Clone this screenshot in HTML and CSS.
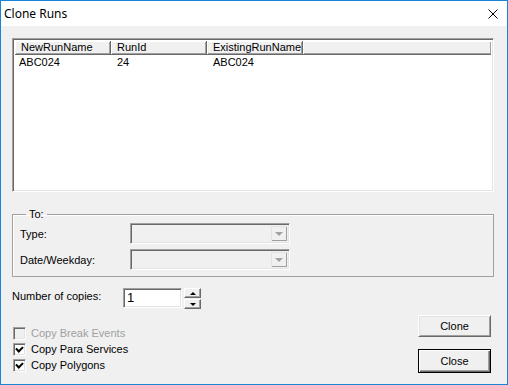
FILE: index.html
```html
<!DOCTYPE html>
<html lang="en">
<head>
    <meta charset="UTF-8">
    <title>Clone Runs</title>
    <link rel="stylesheet" href="styles.css">
</head>
<body>
    <div class="window">
        <!-- Title bar -->
        <div class="titlebar">
            <span class="title">Clone Runs</span>
            <svg class="close-x" width="10" height="10" viewBox="0 0 10 10">
                <path d="M0.5 0.5 L9.5 9.5 M9.5 0.5 L0.5 9.5" stroke="#000" stroke-width="1" fill="none"/>
            </svg>
        </div>

        <div class="content">
            <!-- Runs list -->
            <div class="listview">
                <div class="list-header">
                    <div class="hcell">NewRunName</div>
                    <div class="hcell">RunId</div>
                    <div class="hcell">ExistingRunName</div>
                    <div class="hcell filler"></div>
                </div>
                <div class="list-row">
                    <div class="cell first">ABC024</div>
                    <div class="cell">24</div>
                    <div class="cell">ABC024</div>
                </div>
            </div>

            <!-- Target group -->
            <fieldset class="group">
                <legend>To:</legend>
                <div class="field-row">
                    <label class="field-label">Type:</label>
                    <div class="combo">
                        <div class="combo-btn"><span class="arrow-down grey"></span></div>
                    </div>
                </div>
                <div class="field-row">
                    <label class="field-label">Date/Weekday:</label>
                    <div class="combo">
                        <div class="combo-btn"><span class="arrow-down grey"></span></div>
                    </div>
                </div>
            </fieldset>

            <div class="bottom">
                <div class="left-col">
                    <div class="copies-row">
                        <label class="copies-label">Number of copies:</label>
                        <div class="spin-input">1</div>
                        <div class="spin-btns">
                            <div class="spin-btn"><span class="arrow-up"></span></div>
                            <div class="spin-btn"><span class="arrow-down"></span></div>
                        </div>
                    </div>

                    <div class="checks">
                        <div class="check disabled"><span class="box"></span>Copy Break Events</div>
                        <div class="check"><span class="box checked"></span>Copy Para Services</div>
                        <div class="check"><span class="box checked"></span>Copy Polygons</div>
                    </div>
                </div>

                <div class="right-col">
                    <div class="btn">Clone</div>
                    <div class="btn default">Close</div>
                </div>
            </div>
        </div>
    </div>
</body>
</html>
```

FILE: styles.css
```css
/* Page */
body {
    margin: 0;
    font-family: "Liberation Sans", Arial, sans-serif;
    font-size: 11px;
    color: #000;
}

.window {
    width: 508px;
    height: 385px;
    box-sizing: border-box;
    border: 1px solid #1883d7;
    background: #f0f0f0;
    display: flex;
    flex-direction: column;
}

/* Title bar */
.titlebar {
    height: 25px;
    background: #fff;
    display: flex;
    align-items: center;
    justify-content: space-between;
    padding: 0 9px 0 3px;
}

.title {
    font-family: "Noto Sans", sans-serif;
    font-size: 12px;
}

.close-x {
    margin-top: 1px;
}

.content {
    padding: 12px 13px 0 11px;
}

/* Sunken 3D border used by list, inputs */
.listview,
.combo,
.spin-input {
    border-style: solid;
    border-width: 1px;
    border-color: #a0a0a0 #fff #fff #a0a0a0;
    box-shadow: inset 1px 1px 0 #696969, inset -1px -1px 0 #e3e3e3;
}

/* List view */
.listview {
    height: 154px;
    box-sizing: border-box;
    background: #fff;
    padding: 2px;
}

.list-header {
    display: flex;
    height: 14px;
}

.hcell {
    width: 96px;
    box-sizing: border-box;
    background: #f0f0f0;
    padding-left: 6px;
    line-height: 13px;
    box-shadow: inset 1px 1px 0 #fff, inset -1px -1px 0 #a0a0a0;
    border-right: 1px solid #696969;
    border-bottom: 1px solid #696969;
    height: 14px;
}

.hcell.filler {
    flex: 1;
    border-right: none;
}

.list-row {
    display: flex;
    height: 14px;
    line-height: 14px;
}

.cell {
    width: 96px;
    box-sizing: border-box;
    padding-left: 6px;
}

.cell.first {
    padding-left: 4px;
}

/* Group box */
.group {
    margin: 16px 0 0 0;
    padding: 2px 7px 6px 7px;
    border: 1px solid #a0a0a0;
    box-shadow: inset 1px 1px 0 #fff;
}

.group legend {
    margin-left: 6px;
    padding: 0 3px;
    line-height: 13px;
    font-size: 11px;
}

.field-row {
    display: flex;
    align-items: center;
    height: 21px;
}

.field-row + .field-row {
    margin-top: 5px;
}

.field-label {
    width: 110px;
}

.combo {
    width: 160px;
    height: 21px;
    box-sizing: border-box;
    background: #f0f0f0;
    display: flex;
    justify-content: flex-end;
    padding: 2px;
}

.combo-btn {
    width: 16px;
    height: 15px;
    background: #f0f0f0;
    box-shadow: inset 1px 1px 0 #e3e3e3, inset -1px -1px 0 #a0a0a0;
    display: flex;
    align-items: center;
    justify-content: center;
}

/* Small triangles */
.arrow-down,
.arrow-up {
    width: 0;
    height: 0;
    border-left: 3px solid transparent;
    border-right: 3px solid transparent;
}

.arrow-down {
    border-top: 3px solid #000;
}

.arrow-up {
    border-bottom: 3px solid #000;
}

.arrow-down.grey {
    border-left-width: 4px;
    border-right-width: 4px;
    border-top: 4px solid #a0a0a0;
}

/* Bottom section */
.bottom {
    display: flex;
    justify-content: space-between;
}

.copies-row {
    margin-top: 11px;
    display: flex;
    align-items: flex-start;
}

.copies-label {
    width: 111px;
    line-height: 16px;
    margin-top: 0;
}

.spin-input {
    width: 59px;
    height: 20px;
    box-sizing: border-box;
    background: #fff;
    font-size: 13px;
    line-height: 18px;
    padding-left: 3px;
}

.spin-btns {
    margin-left: 2px;
    display: flex;
    flex-direction: column;
    gap: 1px;
}

.spin-btn {
    width: 17px;
    height: 10px;
    box-sizing: border-box;
    background: #f0f0f0;
    border-style: solid;
    border-width: 1px;
    border-color: #fff #696969 #696969 #fff;
    box-shadow: inset -1px -1px 0 #a0a0a0;
    display: flex;
    align-items: center;
    justify-content: center;
}

.checks {
    margin-top: 16px;
}

.check {
    display: flex;
    align-items: center;
    height: 16px;
    padding-left: 1px;
}

.check.disabled {
    color: #a0a0a0;
}

.box {
    width: 13px;
    height: 13px;
    box-sizing: border-box;
    margin-right: 5px;
    background: #fff;
    border-style: solid;
    border-width: 1px;
    border-color: #a0a0a0 #fff #fff #a0a0a0;
    box-shadow: inset 1px 1px 0 #696969, inset -1px -1px 0 #e3e3e3;
    position: relative;
}

.check.disabled .box {
    background: #f0f0f0;
}

/* Check mark */
.box.checked::after {
    content: "";
    position: absolute;
    left: 2px;
    top: 1px;
    width: 5px;
    height: 3px;
    border-left: 2px solid #000;
    border-bottom: 2px solid #000;
    transform: translate(0, 1px) rotate(-45deg);
    transform-origin: center;
}

/* Buttons */
.right-col {
    margin-right: 3px;
    padding-top: 38px;
    display: flex;
    flex-direction: column;
    gap: 12px;
}

.btn {
    width: 73px;
    height: 22px;
    box-sizing: border-box;
    background: #f0f0f0;
    border-style: solid;
    border-width: 1px;
    border-color: #fff #696969 #696969 #fff;
    box-shadow: inset 1px 1px 0 #e3e3e3, inset -1px -1px 0 #a0a0a0;
    text-align: center;
    line-height: 20px;
}

.btn.default {
    height: 24px;
    border: 1px solid #000;
    box-shadow: inset 1px 1px 0 #fff, inset -1px -1px 0 #696969, inset -2px -2px 0 #a0a0a0;
    line-height: 22px;
}
```
